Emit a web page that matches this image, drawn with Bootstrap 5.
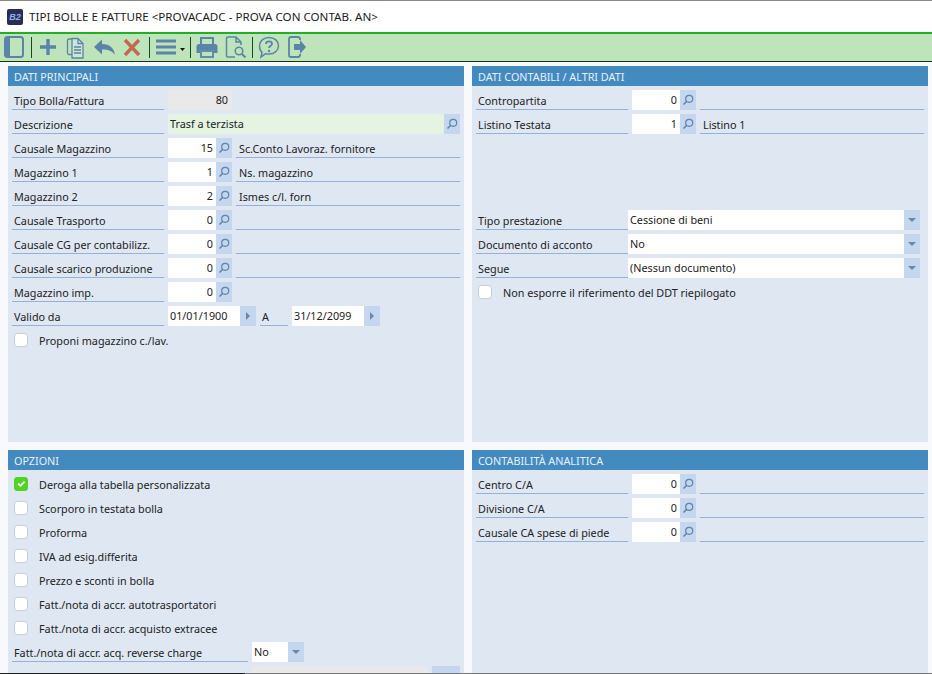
<!DOCTYPE html>
<html lang="it"><head><meta charset="utf-8"><title>Tipi bolle e fatture</title>
<link rel="stylesheet" href="https://cdn.jsdelivr.net/npm/bootstrap@5.3.0/dist/css/bootstrap.min.css">
<style>
html,body{height:674px;overflow:hidden;background:#f8f9fc}
body{font-family:"Noto Sans","Liberation Sans",sans-serif;font-size:10.8px;line-height:20px;color:#222}
.win-top{height:32px;background:#fff;border-top:1px solid #8a8a8a;padding-left:7px;gap:6px;font-size:11.6px;color:#1c1c1c}
.app-logo{width:16px;height:16px;background:#282c58;border-radius:2px;color:#8fb4ea;font:italic 700 9px/16px "Liberation Sans",sans-serif;text-align:center}
.tbar{height:30px;background:#bfe4bb;border-top:2px solid #1fb11f;border-bottom:1px solid #0d3f12}
.tbar svg{display:block;flex:none;height:27px;width:28px}
.tbar svg.wide{width:35px}
.tsep{width:1px;height:21px;background:#0f4f1c;margin:3px 2px 0 3px;flex:none}
.sheet{display:grid;grid-template-columns:456px 456px;grid-template-rows:376px 300px;gap:8px;padding:4px 0 0 8px}
.pane{background:#dfe7f2;overflow:hidden}
.pane-head{height:20px;background:#438ac1;color:#e8f0f8;padding-left:6px;line-height:21px;margin-bottom:4px}
.frow{display:flex;gap:4px;height:20px;margin:0 4px 4px}
.lbl{width:152px;flex:none;border-bottom:1px solid #94b2d6;padding-left:2px;white-space:nowrap;overflow:hidden;line-height:22px}
.lbl-long{width:236px}
.lbl-a{width:28px}
.fld{background:#fff;height:20px;padding:0 3px 0 2px;white-space:nowrap;line-height:19px;flex:none}
.num{width:48px;text-align:right}
.num-ro{width:64px;padding-right:4px;text-align:right}
.dt{width:72px}
.ro{background:#e9e9e9}
.desc-green{background:#e4f3e2;width:276px}
.sel-wide{width:276px}
.sel-short{width:36px}
.dsc{flex:1;border-bottom:1px solid #94b2d6;padding-left:3px;white-space:nowrap;line-height:22px}
.join{display:flex;flex:none}
.fbtn{width:16px;height:20px;padding:0;border:0;border-radius:0;background:#c4d7ee;display:flex;align-items:center;justify-content:center;flex:none}
.fbtn-wide{width:28px}
.tri-down{width:0;height:0;border-left:4px solid transparent;border-right:4px solid transparent;border-top:4px solid #6c86a6}
.tri-right{width:0;height:0;border-top:4px solid transparent;border-bottom:4px solid transparent;border-left:4px solid #6c86a6}
.cbrow{display:flex;align-items:center;height:20px;margin:0 4px 4px 6px}
.cbrow span{padding-top:2px}
.cbrow .form-check-input{width:14px;height:14px;margin:0 11px 0 0;flex:none;border:1px solid #c9cdd3;border-radius:3px;background-color:#fff}
.cbrow .form-check-input:checked{background-color:#4fd422;border-color:#4fd422}
.gap-72{height:72px}
.edge{position:fixed;left:0;right:0;top:673px;height:1px;background:linear-gradient(90deg,#222 0,#222 245px,#777 245px,#777 100%)}
</style></head><body>
<div class="win-top d-flex align-items-center"><div class="app-logo">B2</div><div>TIPI BOLLE E FATTURE &lt;PROVACADC - PROVA CON CONTAB. AN&gt;</div></div>
<div class="tbar d-flex">
<svg viewBox="0 0 28 27"><rect x="5" y="3" width="18" height="20" rx="2.5" fill="none" stroke="#5b84a8" stroke-width="2"/><rect x="5" y="3" width="5" height="20" fill="#5b84a8"/></svg>
<div class="tsep"></div>
<svg viewBox="0 0 28 27"><path d="M14 5v16M6 13h16" stroke="#5b84a8" stroke-width="3.4" fill="none"/></svg>
<svg viewBox="0 0 28 27" fill="none" stroke="#5b84a8" stroke-width="1.3"><path d="M10 5H7q-1.500 0-1.500 1.500V19q0 1.500 1.500 1.500h3"/><path d="M10 4.500h6l5 5V24H10z" fill="#cfe4d2"/><path d="M16 4.500v5h5M12 13h7M12 16h7M12 19h7"/></svg>
<svg viewBox="0 0 28 27"><path d="M4 13l8-7.500v4.500c8 0 12 4 13 11-3-4-6-5.500-13-5.500v5z" fill="#5b84a8"/></svg>
<svg viewBox="0 0 28 27"><path d="M7 6l14 15M21 6L7 21" stroke="#c2694f" stroke-width="3.4" fill="none"/></svg>
<div class="tsep"></div>
<svg class="wide" viewBox="0 0 35 27"><path d="M4 7h20M4 13h20M4 19h20" stroke="#5b84a8" stroke-width="2.8" fill="none"/><path d="M28 14h5l-2.500 3z" fill="#111"/></svg>
<div class="tsep"></div>
<svg viewBox="0 0 28 27"><path d="M8 10V4h12v6" fill="none" stroke="#5b84a8" stroke-width="2"/><path d="M6 10h16q2.500 0 2.500 2.500V19H21v-3H7v3H3.500v-6.500Q3.500 10 6 10z" fill="#5b84a8"/><rect x="8" y="17" width="12" height="6" fill="none" stroke="#5b84a8" stroke-width="1.800"/></svg>
<svg viewBox="0 0 28 27" fill="none" stroke="#5b84a8" stroke-width="1.500"><path d="M14 23H7q-1.500 0-1.500-1.500v-17Q5.500 3 7 3h8l5 5v3"/><path d="M15 3v5h5"/><circle cx="18" cy="17" r="3.800"/><path d="M21 20l3.500 3.500" stroke-width="2"/></svg>
<div class="tsep"></div>
<svg viewBox="0 0 28 27"><path d="M14 3.500c5.500 0 9.500 3.700 9.500 8.300s-4 8.300-9.500 8.300c-1.200 0-2.300-.2-3.300-.5L6 23l1-4.500c-1.600-1.500-2.500-4-2.500-6.700 0-4.600 4-8.300 9.500-8.300z" fill="none" stroke="#5b84a8" stroke-width="1.500"/><path d="M11 10c0-1.800 1.300-2.700 3-2.700s3 1 3 2.500c0 2.200-3 2.200-3 4.200" fill="none" stroke="#5b84a8" stroke-width="1.800"/><circle cx="14" cy="17" r="1.200" fill="#5b84a8"/></svg>
<svg viewBox="0 0 28 27"><path d="M17 6V5q0-2-2-2H8Q6 3 6 5v16q0 2 2 2h7q2 0 2-2v-1" fill="none" stroke="#5b84a8" stroke-width="1.800"/><path d="M11 10h6V6l6 7-6 7v-4h-6z" fill="#5b84a8"/></svg>
</div>
<svg width="0" height="0" class="position-absolute"><defs><symbol id="lens" viewBox="0 0 12 12"><circle cx="7.200" cy="4.800" r="3.500" fill="none" stroke="#5e84ad" stroke-width="1.200"/><path d="M4.500 7.500L1.500 10.500" stroke="#5e84ad" stroke-width="1.600"/></symbol></defs></svg>
<div class="sheet">
<section class="pane">
<div class="pane-head">DATI PRINCIPALI</div>
<div class="frow"><div class="lbl">Tipo Bolla/Fattura</div><div class="fld num-ro ro">80</div></div>
<div class="frow"><div class="lbl">Descrizione</div><div class="join"><div class="fld desc-green">Trasf a terzista</div><button class="btn fbtn"><svg width="12" height="12"><use href="#lens"/></svg></button></div></div>
<div class="frow"><div class="lbl">Causale Magazzino</div><div class="join"><div class="fld num">15</div><button class="btn fbtn"><svg width="12" height="12"><use href="#lens"/></svg></button></div><div class="dsc">Sc.Conto Lavoraz. fornitore</div></div>
<div class="frow"><div class="lbl">Magazzino 1</div><div class="join"><div class="fld num">1</div><button class="btn fbtn"><svg width="12" height="12"><use href="#lens"/></svg></button></div><div class="dsc">Ns. magazzino</div></div>
<div class="frow"><div class="lbl">Magazzino 2</div><div class="join"><div class="fld num">2</div><button class="btn fbtn"><svg width="12" height="12"><use href="#lens"/></svg></button></div><div class="dsc">Ismes c/l. forn</div></div>
<div class="frow"><div class="lbl">Causale Trasporto</div><div class="join"><div class="fld num">0</div><button class="btn fbtn"><svg width="12" height="12"><use href="#lens"/></svg></button></div><div class="dsc"></div></div>
<div class="frow"><div class="lbl">Causale CG per contabilizz.</div><div class="join"><div class="fld num">0</div><button class="btn fbtn"><svg width="12" height="12"><use href="#lens"/></svg></button></div><div class="dsc"></div></div>
<div class="frow"><div class="lbl">Causale scarico produzione</div><div class="join"><div class="fld num">0</div><button class="btn fbtn"><svg width="12" height="12"><use href="#lens"/></svg></button></div><div class="dsc"></div></div>
<div class="frow"><div class="lbl">Magazzino imp.</div><div class="join"><div class="fld num">0</div><button class="btn fbtn"><svg width="12" height="12"><use href="#lens"/></svg></button></div></div>
<div class="frow"><div class="lbl">Valido da</div><div class="join"><div class="fld dt">01/01/1900</div><button class="btn fbtn"><span class="tri-right"></span></button></div><div class="lbl lbl-a">A</div><div class="join"><div class="fld dt">31/12/2099</div><button class="btn fbtn"><span class="tri-right"></span></button></div></div>
<label class="cbrow"><input class="form-check-input" type="checkbox"><span>Proponi magazzino c./lav.</span></label>
</section>
<section class="pane">
<div class="pane-head">DATI CONTABILI / ALTRI DATI</div>
<div class="frow"><div class="lbl">Contropartita</div><div class="join"><div class="fld num">0</div><button class="btn fbtn"><svg width="12" height="12"><use href="#lens"/></svg></button></div><div class="dsc"></div></div>
<div class="frow"><div class="lbl">Listino Testata</div><div class="join"><div class="fld num">1</div><button class="btn fbtn"><svg width="12" height="12"><use href="#lens"/></svg></button></div><div class="dsc">Listino 1</div></div>
<div class="gap-72"></div>
<div class="frow gap-0"><div class="lbl">Tipo prestazione</div><div class="join"><div class="fld sel-wide">Cessione di beni</div><button class="btn fbtn"><span class="tri-down"></span></button></div></div>
<div class="frow gap-0"><div class="lbl">Documento di acconto</div><div class="join"><div class="fld sel-wide">No</div><button class="btn fbtn"><span class="tri-down"></span></button></div></div>
<div class="frow gap-0"><div class="lbl">Segue</div><div class="join"><div class="fld sel-wide">(Nessun documento)</div><button class="btn fbtn"><span class="tri-down"></span></button></div></div>
<label class="cbrow"><input class="form-check-input" type="checkbox"><span>Non esporre il riferimento del DDT riepilogato</span></label>
</section>
<section class="pane">
<div class="pane-head">OPZIONI</div>
<label class="cbrow"><input class="form-check-input" type="checkbox" checked><span>Deroga alla tabella personalizzata</span></label>
<label class="cbrow"><input class="form-check-input" type="checkbox"><span>Scorporo in testata bolla</span></label>
<label class="cbrow"><input class="form-check-input" type="checkbox"><span>Proforma</span></label>
<label class="cbrow"><input class="form-check-input" type="checkbox"><span>IVA ad esig.differita</span></label>
<label class="cbrow"><input class="form-check-input" type="checkbox"><span>Prezzo e sconti in bolla</span></label>
<label class="cbrow"><input class="form-check-input" type="checkbox"><span>Fatt./nota di accr. autotrasportatori</span></label>
<label class="cbrow"><input class="form-check-input" type="checkbox"><span>Fatt./nota di accr. acquisto extracee</span></label>
<div class="frow"><div class="lbl lbl-long">Fatt./nota di accr. acq. reverse charge</div><div class="join"><div class="fld sel-short">No</div><button class="btn fbtn"><span class="tri-down"></span></button></div></div>
<div class="frow"><div class="lbl lbl-long border-0"></div><div class="fld ro flex-grow-1"></div><button class="btn fbtn fbtn-wide"></button></div>
</section>
<section class="pane">
<div class="pane-head">CONTABILITÀ ANALITICA</div>
<div class="frow"><div class="lbl">Centro C/A</div><div class="join"><div class="fld num">0</div><button class="btn fbtn"><svg width="12" height="12"><use href="#lens"/></svg></button></div><div class="dsc"></div></div>
<div class="frow"><div class="lbl">Divisione C/A</div><div class="join"><div class="fld num">0</div><button class="btn fbtn"><svg width="12" height="12"><use href="#lens"/></svg></button></div><div class="dsc"></div></div>
<div class="frow"><div class="lbl">Causale CA spese di piede</div><div class="join"><div class="fld num">0</div><button class="btn fbtn"><svg width="12" height="12"><use href="#lens"/></svg></button></div><div class="dsc"></div></div>
</section>
</div>
<div class="edge"></div>
<script src="https://cdn.jsdelivr.net/npm/bootstrap@5.3.0/dist/js/bootstrap.bundle.min.js"></script>
</body></html>
